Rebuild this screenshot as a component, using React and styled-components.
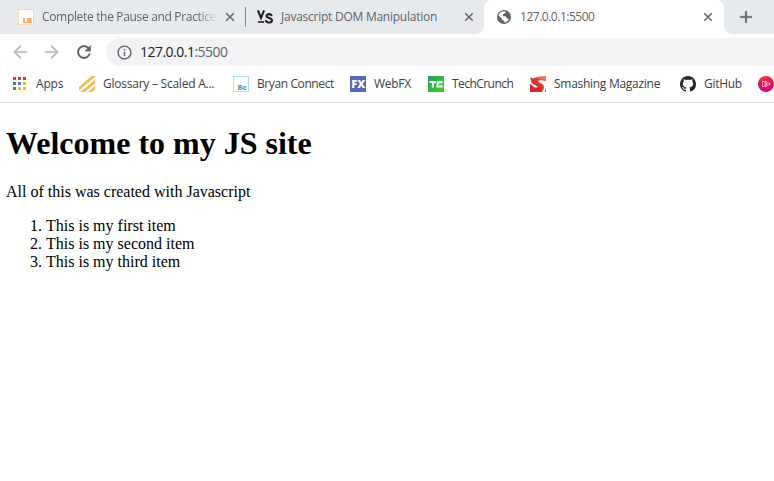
import React from "react";
import styled, { createGlobalStyle } from "styled-components";
import {
  MdArrowBack,
  MdArrowForward,
  MdRefresh,
  MdInfoOutline,
  MdAdd,
} from "react-icons/md";

const GlobalStyle = createGlobalStyle`
  * { box-sizing: border-box; }
  body { margin: 0; background: #fff; overflow: hidden; }
`;

const Browser = styled.div`
  width: 774px;
  height: 481px;
  overflow: hidden;
  background: #fff;
  font-family: "Open Sans", "Noto Sans", sans-serif;
`;

const TabStrip = styled.div`
  display: flex;
  height: 34px;
  background: #e7eaed;
`;

const Tab = styled.div`
  display: flex;
  align-items: center;
  flex: none;
  width: ${(p) => p.$width}px;
  height: 34px;
  padding: 0 ${(p) => (p.$active ? 10 : 9)}px 0 ${(p) => p.$inset}px;
  color: #5f6368;
  background: ${(p) => (p.$active ? "#fff" : "transparent")};
  border-radius: ${(p) => (p.$active ? "8px 8px 0 0" : "0")};
  position: relative;
  ${(p) =>
    p.$active &&
    `&::before, &::after {
      content: "";
      position: absolute;
      bottom: 0;
      width: 8px;
      height: 8px;
    }
    &::before { left: -8px; background: radial-gradient(circle at 0 0, transparent 7.5px, #fff 8.2px); }
    &::after { right: -8px; background: radial-gradient(circle at 100% 0, transparent 7.5px, #fff 8.2px); }`}
`;

const TabTitle = styled.span`
  flex: 1;
  margin-left: 8px;
  margin-right: 6px;
  white-space: nowrap;
  font-size: 12px;
  line-height: 18px;
  letter-spacing: ${(p) => p.$tracking}px;
  ${(p) => p.$fade && "mask-image: linear-gradient(to right, #000 88%, rgba(0, 0, 0, 0.15) 98%);"}
`;

const TabSeparator = styled.div`
  flex: none;
  width: 1px;
  height: 20px;
  margin-top: 7px;
  background: #85888c;
`;

const IconBox = styled.span`
  display: flex;
  align-items: center;
  justify-content: center;
  flex: none;
  width: ${(p) => p.$size || 16}px;
  height: ${(p) => p.$size || 16}px;
  color: ${(p) => p.$color || "#5f6368"};
  svg { display: block; flex: none; }
`;

const NewTab = styled.div`
  display: flex;
  align-items: center;
  justify-content: center;
  width: 28px;
  margin-left: 8px;
  color: #5f6368;
  path:not([fill="none"]) { stroke: currentColor; stroke-width: 0.4px; }
`;

const Toolbar = styled.div`
  display: flex;
  align-items: center;
  height: 36px;
  padding-left: 10px;
`;

const NavButtons = styled.div`
  display: flex;
  gap: 12px;
  width: 96px;
  path:not([fill="none"]) { stroke: currentColor; stroke-width: 0.4px; }
`;

const AddressBar = styled.div`
  display: flex;
  align-items: center;
  flex: 1;
  height: 28px;
  padding-left: 10px;
  border-radius: 14px 0 0 14px;
  background: #f1f3f4;
`;

const Url = styled.span`
  margin-left: 8px;
  font-size: 14px;
  line-height: 20px;
  letter-spacing: -0.52px;
  color: #202124;
`;

const Port = styled.span`
  color: #5f6368;
`;

const BookmarkBar = styled.div`
  display: flex;
  align-items: center;
  height: 33px;
  padding: 0 0 4px 12px;
  border-bottom: 1px solid #dadce0;
`;

const Bookmark = styled.div`
  display: flex;
  align-items: center;
  flex: none;
  width: ${(p) => p.$width}px;
  gap: 8px;
`;

const BookmarkLabel = styled.span`
  font-size: 12px;
  line-height: 18px;
  white-space: nowrap;
  letter-spacing: ${(p) => p.$tracking}px;
  color: #3c4043;
`;

const Page = styled.main`
  display: flow-root;
  padding: 0 6px;
  font-family: "Liberation Serif", "Times New Roman", serif;
  font-size: 16px;
  color: #000;
`;

const Heading = styled.h1`
  margin: 22px 0 21px;
  font-size: 32px;
  line-height: 37px;
  font-weight: bold;
`;

const Paragraph = styled.p`
  margin: 0 0 16px;
  line-height: 18px;
`;

const List = styled.ol`
  margin: 0;
  padding-left: 40px;
  line-height: 18px;
`;

const CloseIcon = () => (
  <svg width="12" height="12" viewBox="0 0 12 12" stroke="currentColor" strokeWidth="1.5">
    <path d="M2.2 2.2L9.8 9.8M9.8 2.2L2.2 9.8" />
  </svg>
);

const GlobeIcon = () => (
  <svg width="16" height="16" viewBox="0 0 16 16">
    <circle cx="8" cy="8" r="7" fill="#5f6368" />
    <path
      d="M9.6 2.4C10 3.8 9.4 4.5 8 4.7C7.2 4.9 7 5.4 7.1 6.2C7.2 7 6.6 7.2 5.6 7.2H8.8C10 7.2 10.3 7.9 10.4 8.8C10.6 9.6 12 9.2 12.8 10.4C12 12 10.5 13.3 8.3 13.5C8.5 12.3 8.3 11.7 7.3 11.5C6.2 11.2 6.1 10.3 5.9 9.5L2.6 6.8C3 4.2 5.7 1.8 9.6 2.4Z"
      fill="#fff"
    />
    <path d="M2.5 7L6 10.3V11.4L7.2 12.2V14L4 13L1.5 10Z" fill="#5f6368" />
  </svg>
);

const LetterBoxIcon = ({ text, color, border, x }) => (
  <svg width="16" height="16" viewBox="0 0 16 16">
    <rect x=".5" y=".5" width="15" height="15" fill="#fff" stroke={border} />
    <text x={x} y="14" fontFamily="Open Sans, sans-serif" fontSize="7.6" fontWeight="800" letterSpacing="-.3" fill={color}>
      {text}
    </text>
  </svg>
);

const VsIcon = () => (
  <svg width="16" height="16" viewBox="0 0 16 16" fill="none" stroke="#202124" strokeWidth="2.1">
    <path d="M.9 1.4L4 9L7.1 1.4" />
    <path d="M1 13H7" strokeWidth="1.6" />
    <path d="M14.6 7.2C14.4 4.5 9.5 4.5 9.5 7.1C9.5 9.4 15 8.7 15 11.3C15 14.4 8.9 14.2 8.8 11" />
  </svg>
);

const appColors = ["#e33b32", "#e33b32", "#e33b32", "#309b4d", "#4285f4", "#f5b420", "#309b4d", "#f5b420", "#f5b420"];

const AppsIcon = () => (
  <svg width="16" height="16" viewBox="0 0 16 16">
    {appColors.map((c, i) => (
      <rect key={i} x={1 + (i % 3) * 5} y={1 + Math.floor(i / 3) * 5} width="3" height="3" fill={c} />
    ))}
  </svg>
);

const StripesIcon = () => (
  <svg width="16" height="16" viewBox="0 0 16 16" fill="#edbd50">
    <path d="M0 11L12.5 0H16V.8L0 14.4Z" />
    <path d="M1.5 16L16 3.7V7.2L5.8 16Z" />
    <path d="M9 16L16 10V13.5L13.2 16Z" />
  </svg>
);

const WebFxIcon = () => (
  <svg width="16" height="16" viewBox="0 0 16 16">
    <rect width="16" height="16" fill="#4d6cb3" />
    <text x="1.2" y="12" fontFamily="Open Sans, sans-serif" fontSize="11" fontWeight="800" textLength="14" lengthAdjust="spacingAndGlyphs" fill="#fff">
      FX
    </text>
  </svg>
);

const TechCrunchIcon = () => (
  <svg width="16" height="16" viewBox="0 0 16 16">
    <defs>
      <linearGradient id="tc" x1="0" y1="0" x2="1" y2="1">
        <stop offset="0" stopColor="#289b68" />
        <stop offset="1" stopColor="#30dc10" />
      </linearGradient>
    </defs>
    <rect width="16" height="16" fill="url(#tc)" />
    <path d="M1.5 5H8V7H6V11.5H3.8V7H1.5Z" fill="#fff" />
    <path d="M9 5H14.7V7H10.6V9.5H14.7V11.5H8.4V7H9Z" fill="#fff" />
    <path d="M10.6 7H14V9.5H10.6Z" fill="#fff" opacity=".3" />
  </svg>
);

const SmashingIcon = () => (
  <svg width="16" height="16" viewBox="0 0 16 16">
    <defs>
      <linearGradient id="sm" x1="0" y1="1" x2="1" y2="0">
        <stop offset="0" stopColor="#e1181c" />
        <stop offset=".55" stopColor="#d9382c" />
        <stop offset="1" stopColor="#f09078" />
      </linearGradient>
    </defs>
    <path d="M0 1L3 2.4C6 .9 10.5 .2 16 0V5.2L12.4 4.4C9.6 4.1 7.6 4.6 8.4 5.7C9.7 7.1 13.2 7.6 13.8 10C14.3 12.2 13.3 14.6 11.6 16H0V7.8L4.6 11.4C6.2 11.8 8.1 11.4 7.5 10.5C6.3 9.1 3 8.6 1.8 6.7C.8 5 1 3.2 0 1ZM16 11V16H14.6C15.4 14.4 15.8 12.8 16 11Z" fill="url(#sm)" />
  </svg>
);

const GitHubIcon = () => (
  <svg width="16" height="16" viewBox="0 0 16 16" fill="#24292e">
    <path d="M8 0C3.58 0 0 3.58 0 8c0 3.54 2.29 6.53 5.47 7.59.4.07.55-.17.55-.38 0-.19-.01-.82-.01-1.49-2.01.37-2.53-.49-2.69-.94-.09-.23-.48-.94-.82-1.13-.28-.15-.68-.52-.01-.53.63-.01 1.08.58 1.23.82.72 1.21 1.87.87 2.33.66.07-.52.28-.87.51-1.07-1.78-.2-3.64-.89-3.64-3.95 0-.87.31-1.59.82-2.15-.08-.2-.36-1.02.08-2.12 0 0 .67-.21 2.2.82.64-.18 1.32-.27 2-.27s1.36.09 2 .27c1.53-1.04 2.2-.82 2.2-.82.44 1.1.16 1.92.08 2.12.51.56.82 1.27.82 2.15 0 3.07-1.87 3.75-3.65 3.95.29.25.54.73.54 1.48 0 1.07-.01 1.93-.01 2.2 0 .21.15.46.55.38A8.01 8.01 0 0 0 16 8c0-4.42-3.58-8-8-8Z" />
  </svg>
);

const PlayIcon = () => (
  <svg width="16" height="16" viewBox="0 0 16 16">
    <defs>
      <linearGradient id="play" x1="0" y1="0" x2="0" y2="1">
        <stop offset="0" stopColor="#ed3838" />
        <stop offset=".5" stopColor="#d61458" />
        <stop offset="1" stopColor="#e00078" />
      </linearGradient>
    </defs>
    <circle cx="8" cy="8" r="8" fill="url(#play)" />
    <path d="M4.6 5V11L9.6 8ZM7.2 5V11L12.4 8Z" fill="none" stroke="#ffc4d6" strokeWidth=".8" />
  </svg>
);

const bookmarks = [
  { label: "Apps", icon: <AppsIcon />, width: 67, tracking: -0.2 },
  { label: "Glossary – Scaled A...", icon: <StripesIcon />, width: 154, tracking: -0.24 },
  { label: "Bryan Connect", icon: <LetterBoxIcon text="Bc" color="#48a4da" border="#a9dff0" x="4.6" />, width: 117, tracking: -0.4 },
  { label: "WebFX", icon: <WebFxIcon />, width: 78, tracking: -0.3 },
  { label: "TechCrunch", icon: <TechCrunchIcon />, width: 102, tracking: -0.55 },
  { label: "Smashing Magazine", icon: <SmashingIcon />, width: 150, tracking: -0.28 },
  { label: "GitHub", icon: <GitHubIcon />, width: 78, tracking: -0.3 },
  { label: "", icon: <PlayIcon />, width: 30, tracking: 0 },
];

const items = ["This is my first item", "This is my second item", "This is my third item"];

export default function App() {
  return (
    <Browser>
      <GlobalStyle />
      <TabStrip>
        <Tab $width={245} $inset={18}>
          <IconBox><LetterBoxIcon text="LB" color="#f39a38" border="#fbd6a8" x="4.8" /></IconBox>
          <TabTitle $tracking={-0.33} $fade>Complete the Pause and Practice</TabTitle>
          <IconBox $size={12}><CloseIcon /></IconBox>
        </Tab>
        <TabSeparator />
        <Tab $width={238} $inset={11}>
          <IconBox><VsIcon /></IconBox>
          <TabTitle $tracking={-0.25}>Javascript DOM Manipulation</TabTitle>
          <IconBox $size={12}><CloseIcon /></IconBox>
        </Tab>
        <Tab $width={240} $inset={12} $active>
          <IconBox><GlobeIcon /></IconBox>
          <TabTitle $tracking={-0.48}>127.0.0.1:5500</TabTitle>
          <IconBox $size={12}><CloseIcon /></IconBox>
        </Tab>
        <NewTab><MdAdd size={20} /></NewTab>
      </TabStrip>
      <Toolbar>
        <NavButtons>
          <IconBox $size={20} $color="#babcbe"><MdArrowBack size={20} /></IconBox>
          <IconBox $size={20} $color="#babcbe"><MdArrowForward size={20} /></IconBox>
          <IconBox $size={20}><MdRefresh size={20} /></IconBox>
        </NavButtons>
        <AddressBar>
          <IconBox><MdInfoOutline size={17} /></IconBox>
          <Url>127.0.0.1<Port>:5500</Port></Url>
        </AddressBar>
      </Toolbar>
      <BookmarkBar>
        {bookmarks.map((b) => (
          <Bookmark key={b.label} $width={b.width}>
            <IconBox>{b.icon}</IconBox>
            <BookmarkLabel $tracking={b.tracking}>{b.label}</BookmarkLabel>
          </Bookmark>
        ))}
      </BookmarkBar>
      <Page>
        <Heading>Welcome to my JS site</Heading>
        <Paragraph>All of this was created with Javascript</Paragraph>
        <List>
          {items.map((item) => <li key={item}>{item}</li>)}
        </List>
      </Page>
    </Browser>
  );
}
